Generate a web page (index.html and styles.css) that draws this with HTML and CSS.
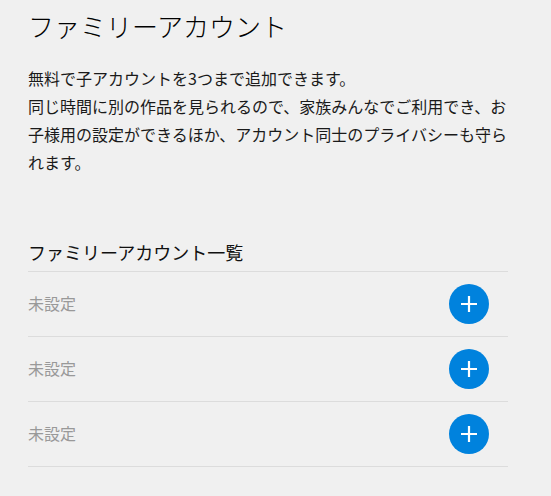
FILE: index.html
```html
<!DOCTYPE html>
<html lang="ja">
<head>
<meta charset="utf-8">
<title>ファミリーアカウント</title>
<link rel="stylesheet" href="styles.css">
</head>
<body>
<main class="page">
  <h1 class="title">ファミリーアカウント</h1>
  <p class="lead">無料で子アカウントを3つまで追加できます。<br>同じ時間に別の作品を見られるので、家族みんなでご利用でき、お子様用の設定ができるほか、アカウント同士のプライバシーも守られます。</p>
  <section class="list">
    <h2 class="list-title">ファミリーアカウント一覧</h2>
    <ul class="rows">
      <li class="row">
        <span class="row-label">未設定</span>
        <button class="add" aria-label="追加"><svg viewBox="0 0 40 40" width="40" height="40"><path d="M12 20H28M20 12V28" stroke="#fff" stroke-width="2.2" fill="none"/></svg></button>
      </li>
      <li class="row">
        <span class="row-label">未設定</span>
        <button class="add" aria-label="追加"><svg viewBox="0 0 40 40" width="40" height="40"><path d="M12 20H28M20 12V28" stroke="#fff" stroke-width="2.2" fill="none"/></svg></button>
      </li>
      <li class="row">
        <span class="row-label">未設定</span>
        <button class="add" aria-label="追加"><svg viewBox="0 0 40 40" width="40" height="40"><path d="M12 20H28M20 12V28" stroke="#fff" stroke-width="2.2" fill="none"/></svg></button>
      </li>
    </ul>
  </section>
</main>
</body>
</html>
```

FILE: styles.css
```css
html, body {
  margin: 0;
  padding: 0;
  background: #f0f0f0;
}
body {
  font-family: "Noto Sans CJK JP", "Noto Sans", sans-serif;
  color: #222;
}
.page {
  width: 480px;
  padding: 8px 0 0 28px;
}
.title {
  margin: 0;
  font-size: 26px;
  line-height: 36px;
  font-weight: 300;
  color: #000;
}
.lead {
  margin: 20px 0 0;
  font-size: 16px;
  line-height: 28px;
  color: #1a1a1a;
}
.list {
  margin-top: 64px;
}
.list-title {
  margin: 0;
  font-size: 18px;
  line-height: 25px;
  font-weight: 400;
  color: #111;
  padding-bottom: 6px;
  border-bottom: 1px solid #dcdcdc;
}
.rows {
  list-style: none;
  margin: 0;
  padding: 0;
}
.row {
  height: 64px;
  display: flex;
  align-items: center;
  justify-content: space-between;
  padding-right: 19px;
  border-bottom: 1px solid #dcdcdc;
}
.row-label {
  font-size: 16px;
  line-height: 22px;
  color: #999;
  padding-bottom: 3px;
}
.add {
  width: 40px;
  height: 40px;
  padding: 0;
  border: 0;
  border-radius: 50%;
  background: #0082dd;
  display: flex;
  align-items: center;
  justify-content: center;
}
.add svg {
  display: block;
}
```
